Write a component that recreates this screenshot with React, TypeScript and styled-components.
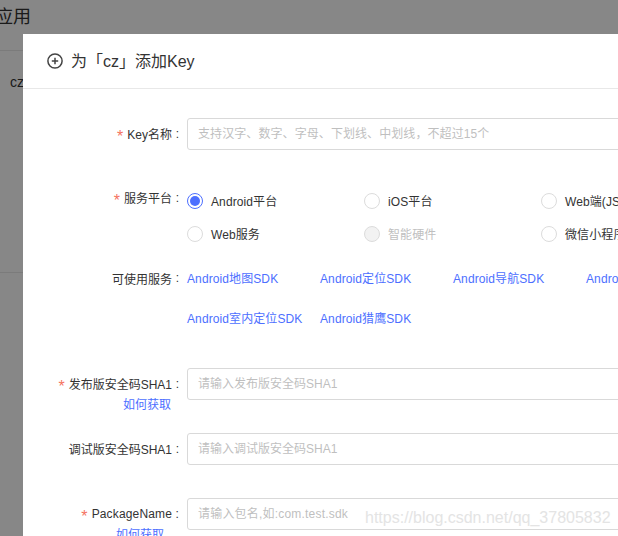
import React from "react";
import styled, { createGlobalStyle } from "styled-components";

const GlobalStyle = createGlobalStyle`
  html, body {
    margin: 0;
    padding: 0;
    height: 100%;
    overflow: hidden;
    background: #fff;
    font-family: "Liberation Sans", "Noto Sans CJK SC", sans-serif;
  }
  * { box-sizing: border-box; }
`;

const Page = styled.div`
  width: 618px;
  height: 536px;
  overflow: hidden;
  position: relative;
`;

const PageTitle = styled.h1`
  margin: 0 0 0 -5px;
  height: 51px;
  padding: 5px 0 0 0;
  font-size: 18px;
  font-weight: 400;
  line-height: 24px;
  color: #333;
  border-bottom: 1px solid #e8e8e8;
`;

const PageCell = styled.div`
  height: 222px;
  padding: 22px 0 0 10px;
  font-size: 14px;
  line-height: 18px;
  color: #333;
  border-bottom: 1px solid #e8e8e8;
`;

const Mask = styled.div`
  position: absolute;
  inset: 0;
  background: rgba(0, 0, 0, 0.47);
`;

const Dialog = styled.div`
  position: absolute;
  left: 23px;
  top: 34px;
  width: 720px;
  height: 560px;
  background: #fff;
`;

const DialogHeader = styled.div`
  height: 55px;
  padding-left: 24px;
  display: flex;
  align-items: center;
  gap: 8px;
  font-size: 16px;
  color: #333;
  border-bottom: 1px solid #e8e8e8;
`;

const DialogTitle = styled.span`
  margin-bottom: 2px;
`;

const Form = styled.div`
  padding-top: 29px;
  display: flex;
  flex-direction: column;
`;

const Row = styled.div<{ $top?: number }>`
  display: flex;
  margin-top: ${(p) => p.$top ?? 0}px;
`;

const LabelCol = styled.div`
  width: 164px;
  padding-right: 8px;
  flex: none;
  position: relative;
`;

const Label = styled.div<{ $height: number; $spacing?: number }>`
  height: ${(p) => p.$height}px;
  display: flex;
  align-items: center;
  justify-content: flex-end;
  font-size: 12px;
  letter-spacing: ${(p) => p.$spacing ?? 0}px;
  color: #333;
  white-space: nowrap;
`;

const Star = styled.span`
  color: #f5735f;
  font-size: 16px;
  margin-right: 4px;
  position: relative;
  top: 3px;
`;

const Colon = styled.span`
  width: 7px;
  text-align: right;
`;

const HowTo = styled.a<{ $right: number }>`
  position: absolute;
  right: ${(p) => p.$right}px;
  top: 29px;
  font-size: 12px;
  line-height: 16px;
  color: #4d6fff;
  white-space: nowrap;
`;

const Input = styled.input<{ $spacing?: number }>`
  width: 520px;
  height: 32px;
  flex: none;
  padding: 0 10px;
  border: 1px solid #d9d9d9;
  border-radius: 3px;
  font-family: inherit;
  font-size: 12px;
  letter-spacing: ${(p) => p.$spacing ?? 0}px;
  outline: none;
  &::placeholder {
    color: #bfbfbf;
    opacity: 1;
  }
`;

const RadioGrid = styled.div`
  display: grid;
  grid-template-columns: repeat(3, 177px);
  grid-auto-rows: 33px;
`;

const RadioItem = styled.label<{ $disabled?: boolean }>`
  display: flex;
  align-items: center;
  gap: 8px;
  font-size: 12px;
  letter-spacing: 0.1px;
  white-space: nowrap;
  color: ${(p) => (p.$disabled ? "#bfbfbf" : "#333")};
`;

const RadioDot = styled.span<{ $checked?: boolean; $disabled?: boolean }>`
  width: 16px;
  height: 16px;
  flex: none;
  border-radius: 50%;
  border: 1px solid ${(p) => (p.$checked ? "#4d6fff" : "#dcdcdc")};
  background: ${(p) => (p.$disabled ? "#f2f2f2" : "#fff")};
  display: flex;
  align-items: center;
  justify-content: center;
  &::after {
    content: "";
    display: ${(p) => (p.$checked ? "block" : "none")};
    width: 10px;
    height: 10px;
    border-radius: 50%;
    background: #4d6fff;
  }
`;

const ServiceGrid = styled.div`
  display: grid;
  grid-template-columns: repeat(4, 133px);
  grid-auto-rows: 39.5px;
`;

const ServiceLink = styled.a`
  display: flex;
  align-items: center;
  font-size: 12px;
  letter-spacing: 0.1px;
  color: #4d6fff;
  white-space: nowrap;
`;

const Watermark = styled.div`
  position: absolute;
  left: 365px;
  top: 508px;
  font-size: 16px;
  line-height: 20px;
  color: #e4e4e4;
  white-space: nowrap;
`;

const PlusIcon = () => (
  <svg width="16" height="16" viewBox="0 0 16 16" fill="none" stroke="#444" strokeWidth="1.5">
    <circle cx="8" cy="8" r="7.1" />
    <path d="M8 4.8v6.4M4.8 8h6.4" />
  </svg>
);

const platforms = [
  { name: "Android平台", checked: true },
  { name: "iOS平台" },
  { name: "Web端(JS API)" },
  { name: "Web服务" },
  { name: "智能硬件", disabled: true },
  { name: "微信小程序" },
];

const services = [
  "Android地图SDK",
  "Android定位SDK",
  "Android导航SDK",
  "Android语音SDK",
  "Android室内定位SDK",
  "Android猎鹰SDK",
];

export default function App() {
  return (
    <Page>
      <GlobalStyle />
      <PageTitle>应用</PageTitle>
      <PageCell>cz</PageCell>
      <Mask />
      <Dialog>
        <DialogHeader>
          <PlusIcon />
          <DialogTitle>为「cz」添加Key</DialogTitle>
        </DialogHeader>
        <Form>
          <Row>
            <LabelCol>
              <Label $height={31}>
                <Star>*</Star>Key名称<Colon>:</Colon>
              </Label>
            </LabelCol>
            <Input $spacing={0.08} placeholder="支持汉字、数字、字母、下划线、中划线，不超过15个" />
          </Row>
          <Row $top={34}>
            <LabelCol>
              <Label $height={27}>
                <Star>*</Star>服务平台<Colon>:</Colon>
              </Label>
            </LabelCol>
            <RadioGrid>
              {platforms.map((item) => (
                <RadioItem key={item.name} $disabled={item.disabled}>
                  <RadioDot $checked={item.checked} $disabled={item.disabled} />
                  {item.name}
                </RadioItem>
              ))}
            </RadioGrid>
          </Row>
          <Row $top={8}>
            <LabelCol>
              <Label $height={40}>
                可使用服务<Colon>:</Colon>
              </Label>
            </LabelCol>
            <ServiceGrid>
              {services.map((item) => (
                <ServiceLink key={item}>{item}</ServiceLink>
              ))}
            </ServiceGrid>
          </Row>
          <Row $top={31}>
            <LabelCol>
              <Label $height={31}>
                <Star>*</Star>发布版安全码SHA1<Colon>:</Colon>
              </Label>
              <HowTo $right={16}>如何获取</HowTo>
            </LabelCol>
            <Input placeholder="请输入发布版安全码SHA1" />
          </Row>
          <Row $top={33}>
            <LabelCol>
              <Label $height={31}>
                调试版安全码SHA1<Colon>:</Colon>
              </Label>
            </LabelCol>
            <Input placeholder="请输入调试版安全码SHA1" />
          </Row>
          <Row $top={33}>
            <LabelCol>
              <Label $height={31} $spacing={0.15}>
                <Star>*</Star>PackageName<Colon>:</Colon>
              </Label>
              <HowTo $right={23}>如何获取</HowTo>
            </LabelCol>
            <Input $spacing={0.2} placeholder="请输入包名,如:com.test.sdk" />
          </Row>
        </Form>
      </Dialog>
      <Watermark>https://blog.csdn.net/qq_37805832</Watermark>
    </Page>
  );
}
